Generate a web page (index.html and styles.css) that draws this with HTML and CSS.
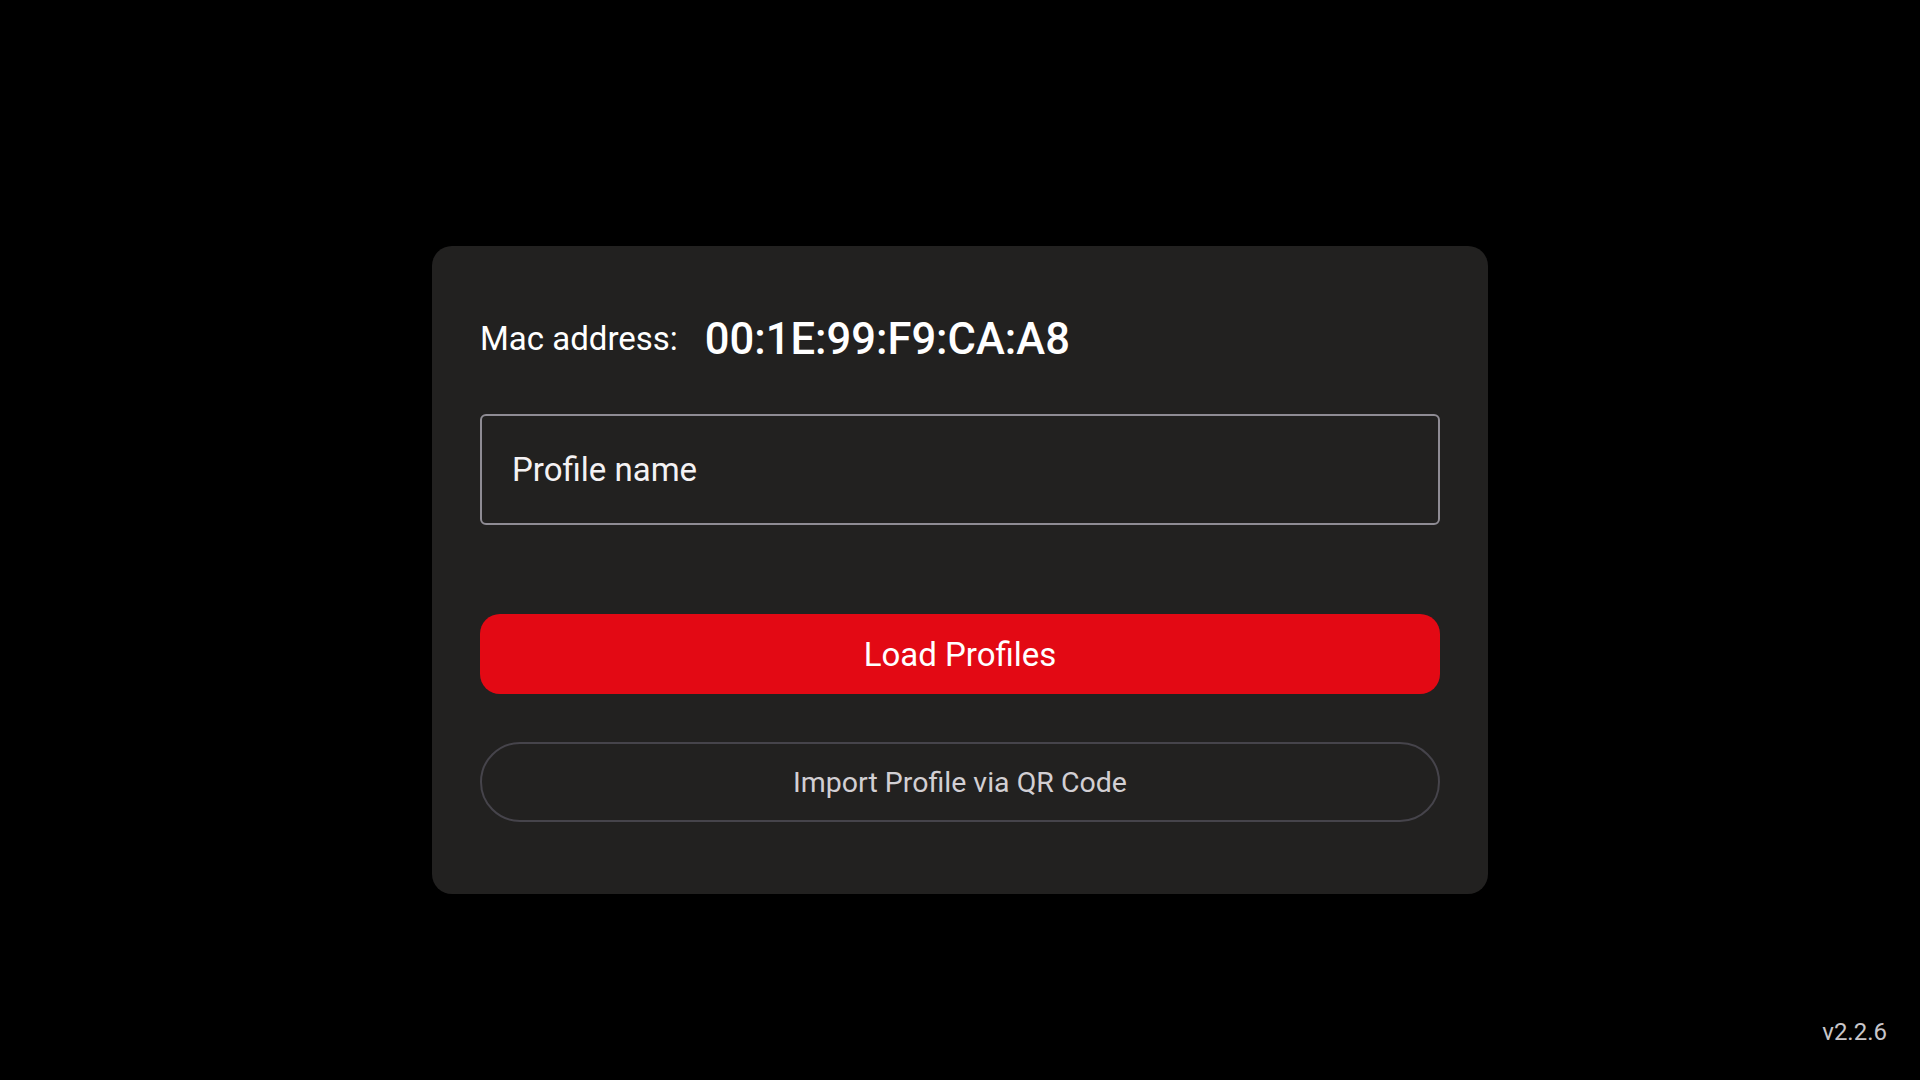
FILE: index.html
```html
<!DOCTYPE html>
<html lang="en">
<head>
  <meta charset="UTF-8">
  <meta name="viewport" content="width=device-width, initial-scale=1.0">
  <title>Profiles</title>
  <link rel="stylesheet" href="styles.css">
</head>
<body>
  <main class="screen">
    <div class="card">
      <div class="mac-row">
        <span class="mac-label">Mac address:</span>
        <span class="mac-value">00:1E:99:F9:CA:A8</span>
      </div>

      <form class="profile-form">
        <input class="profile-input" type="text" name="profile" placeholder="Profile name">
        <button class="btn btn-primary" type="submit">Load Profiles</button>
        <button class="btn btn-outline" type="button">Import Profile via QR Code</button>
      </form>
    </div>
  </main>

  <div class="version">v2.2.6</div>
</body>
</html>
```

FILE: styles.css
```css
html, body {
  margin: 0;
  height: 100%;
  background: #000;
}

body {
  font-family: Roboto, "Noto Sans", sans-serif;
  color: #fff;
  position: relative;
  overflow: hidden;
}

.screen {
  display: flex;
  justify-content: center;
  padding-top: 246px;
}

.card {
  width: 1056px;
  box-sizing: border-box;
  padding: 67px 48px 72px;
  background: #222120;
  border-radius: 20px;
}

.mac-row {
  display: flex;
  align-items: center;
  gap: 27px;
  height: 52px;
  line-height: 52px;
}

.mac-label {
  font-size: 33px;
}

.mac-value {
  font-size: 43.5px;
  font-weight: 500;
  padding-top: 2px;
}

.profile-form {
  display: flex;
  flex-direction: column;
  margin-top: 49px;
}

.profile-input {
  height: 111px;
  box-sizing: border-box;
  padding: 0 30px;
  background: transparent;
  border: 2px solid #8f8c94;
  border-radius: 6px;
  color: #fff;
  font-family: inherit;
  font-size: 33px;
  outline: none;
}

.profile-input::placeholder {
  color: #f4f2f4;
}

.btn {
  height: 80px;
  font-family: inherit;
  cursor: pointer;
}

.btn-primary {
  margin-top: 89px;
  background: #e30914;
  color: #fff;
  border: none;
  border-radius: 20px;
  font-size: 33px;
}

.btn-outline {
  margin-top: 48px;
  background: transparent;
  color: #d2cfd3;
  border: 2px solid #46444b;
  border-radius: 40px;
  font-size: 28.5px;
}

.version {
  position: absolute;
  right: 33px;
  bottom: 34px;
  font-size: 24px;
  color: #c8c6ca;
}
```
